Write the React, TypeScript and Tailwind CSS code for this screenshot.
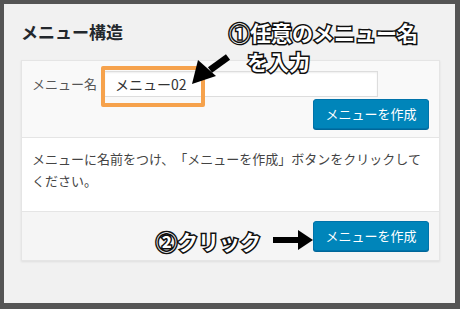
const jp = "font-['Noto_Sans_CJK_JP','Noto_Sans',sans-serif]";

function Outlined({ children, className }: { children: React.ReactNode; className?: string }) {
  return (
    <span
      className={`absolute whitespace-nowrap text-[21px] font-bold leading-[26px] text-white [-webkit-text-stroke:3px_#111] [paint-order:stroke_fill] [text-shadow:1px_1px_1px_rgba(0,0,0,0.25)] ${className ?? ''}`}
    >
      {children}
    </span>
  );
}

function BlueButton({ label }: { label: string }) {
  return (
    <button className="h-[30px] w-[116px] rounded-[3px] border border-[#0073aa] bg-[#0085ba] text-[13px] text-white shadow-[0_1px_0_#006799]">
      {label}
    </button>
  );
}

export default function App() {
  return (
    <div className={`h-[309px] w-[460px] bg-[#555] pb-[6px] pl-[4px] pr-[5px] pt-[4px] ${jp}`}>
      <div className="relative h-full bg-[#f1f1f1] px-[17px] pt-[16px]">
        <h2 className="h-[24px] text-[17px] font-bold leading-[24px] text-[#23282d]">メニュー構造</h2>

        <div className="mt-[16px] w-[419px] shadow-[0_1px_2px_rgba(0,0,0,0.08)]">
          <div className="flex flex-col border border-[#e5e5e5] bg-[#f9f9f9] px-[10px] pb-[8px] pt-[10px]">
            <div className="flex items-center gap-[7px]">
              <span className="text-[13px] text-[#555]">メニュー名</span>
              <div className="flex h-[26px] w-[274px] items-center border border-[#ddd] bg-white pl-[10px] text-[14px] text-[#333] shadow-[inset_0_1px_2px_rgba(0,0,0,0.07)]">
                メニュー02
              </div>
            </div>
            <div className="mt-[2px] flex justify-end">
              <BlueButton label="メニューを作成" />
            </div>
          </div>
          <div className="border-x border-[#e5e5e5] bg-white px-[10px] pb-[19px] pt-[10px] text-[13px] leading-[22px] text-[#444] [text-spacing-trim:space-all]">
            メニューに名前をつけ、「メニューを作成」ボタンをクリックして
            <br />
            ください。
          </div>
          <div className="flex h-[50px] items-center justify-end border border-[#e5e5e5] bg-[#f5f5f5] px-[10px]">
            <BlueButton label="メニューを作成" />
          </div>
        </div>

        {/* annotations */}
        <div className="absolute left-[97px] top-[62px] h-[41px] w-[104px] rounded-[2px] border-[4px] border-[#f6a24c]" />
        <svg className="absolute left-[184px] top-[50px]" width="44" height="36" viewBox="0 0 44 36">
          <path d="M40 3 L22 16" stroke="#000" strokeWidth="7" strokeLinecap="butt" />
          <polygon points="4,30 10,6 28,22" fill="#000" />
        </svg>
        <Outlined className="left-[225px] top-[15px]">①任意のメニュー名</Outlined>
        <Outlined className="left-[243px] top-[44px]">を入力</Outlined>

        <Outlined className="left-[152px] top-[224px]">②クリック</Outlined>
        <svg className="absolute left-[269px] top-[226px]" width="42" height="20" viewBox="0 0 42 20">
          <rect x="0" y="7" width="28" height="6" fill="#000" />
          <polygon points="25,0 40,10 25,20" fill="#000" />
        </svg>
      </div>
    </div>
  );
}
